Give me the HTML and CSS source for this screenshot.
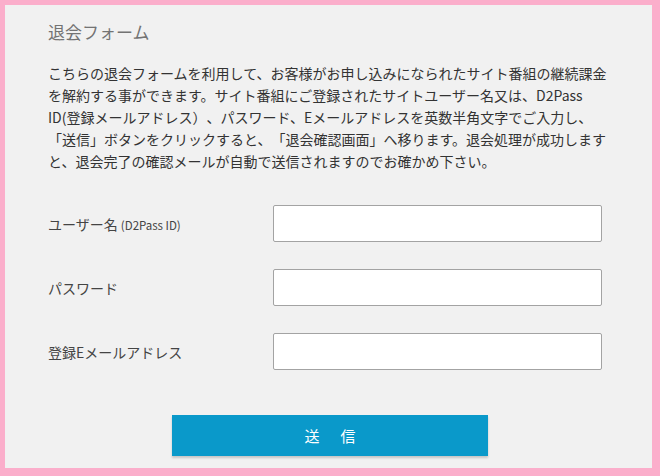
FILE: index.html
```html
<!DOCTYPE html>
<html>
	<head>
		<meta charset="utf-8">
		<title>退会フォーム</title>
		<link rel="stylesheet" href="styles.css">
	</head>
	<body>
	<div id="main">
		<h1>退会フォーム</h1>
		<p class="lead">
			こちらの退会フォームを利用して、お客様がお申し込みになられたサイト番組の継続課金<br>
			を解約する事ができます。サイト番組にご登録されたサイトユーザー名又は、D2Pass<br>
			ID(登録メールアドレス）、パスワード、Eメールアドレスを英数半角文字でご入力し、<br>
			「送信」ボタンをクリックすると、「退会確認画面」へ移ります。退会処理が成功します<br>
			と、退会完了の確認メールが自動で送信されますのでお確かめ下さい。
		</p>
		<form class="form">
			<label class="label" for="username">ユーザー名 <small>(D2Pass ID)</small></label>
			<input type="text" class="field" id="username">
			<label class="label" for="password">パスワード</label>
			<input type="password" class="field" id="password">
			<label class="label" for="email">登録Eメールアドレス</label>
			<input type="text" class="field" id="email">
		</form>
		<div class="submit"><button type="button" class="button">送　信</button></div>
	</div>
	</body>
</html>
```

FILE: styles.css
```css
body{
	margin:0;
	background-color:#fbaecb;
	font-family:"Noto Sans CJK JP", "Noto Sans", sans-serif;
	color:#333;
}
#main{
	background-color:#f1f1f1;
	margin:5px 8px 8px 5px;
	height:463px;
	box-sizing:border-box;
	padding:15px 40px 0 43px;
}
h1{
	margin:0;
	font-size:17px;
	line-height:24px;
	font-weight:normal;
	color:#737373;
}
.lead{
	margin:18px 0 0;
	font-size:14px;
	line-height:22px;
	white-space:nowrap;
	text-spacing-trim:space-all;
	color:#333;
}
.form{
	margin-top:33px;
	display:grid;
	grid-template-columns:225px 329px;
	row-gap:27px;
	align-items:center;
}
.label{
	font-size:14px;
	color:#444;
}
.label small{
	font-size:11.5px;
}
.field{
	height:37px;
	box-sizing:border-box;
	border:1px solid #a3a3a3;
	border-radius:2px;
	background:white;
	margin:0;
}
.submit{
	text-align:center;
	margin-top:45px;
}
.button{
	width:316px;
	height:41px;
	border:none;
	border-radius:0;
	background-color:#0a99ca;
	box-shadow:0 2px 2px rgba(0,0,0,0.18);
	color:white;
	font-family:"Noto Sans CJK JP", sans-serif;
	font-size:15px;
	letter-spacing:3px;
	padding:0 0 0 3px;
	cursor:pointer;
	vertical-align:top;
}
```
